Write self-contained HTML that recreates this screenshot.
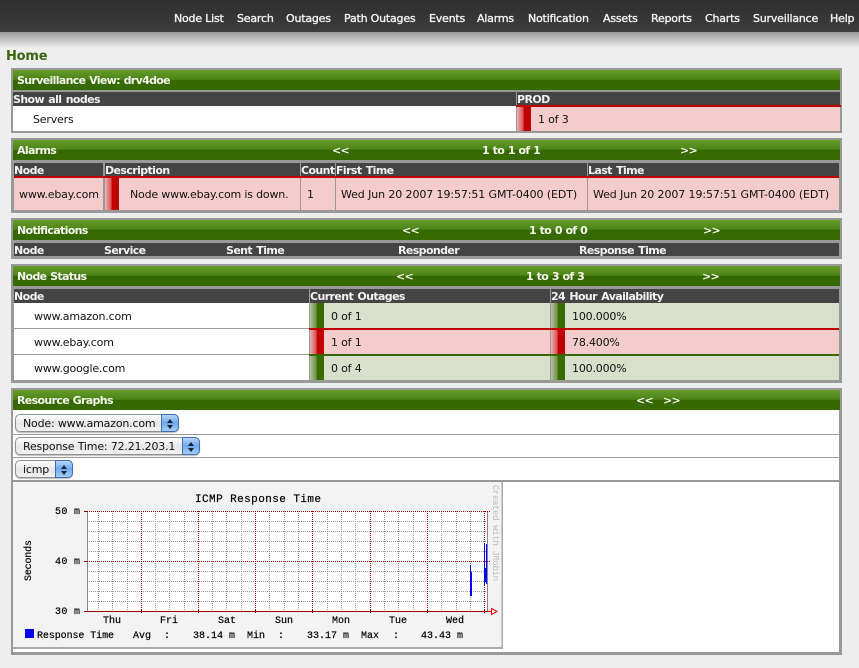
<!DOCTYPE html>
<html><head><meta charset="utf-8"><title>Home</title>
<style>
html,body{margin:0;padding:0;width:859px;height:668px;overflow:hidden;background:#eeeeee;font-family:"DejaVu Sans","Liberation Sans",sans-serif;font-size:11px;color:#111}
div,span{position:absolute;white-space:nowrap;box-sizing:border-box}
#top{left:0;top:0;width:859px;height:32px;background:linear-gradient(#2f2f2f,#3c3c3c)}
#sh{left:0;top:32px;width:859px;height:16px;background:linear-gradient(#9a9a9a,#eeeeee)}
.n{top:11px;color:#f4f4f4;font-size:11px;-webkit-text-stroke:.35px #f4f4f4;letter-spacing:-.2px;line-height:16px}
.p{left:11px;width:831px;background:#999;}
.t{left:2px;width:827px;height:20px;top:2px;background:linear-gradient(#659c2a 0,#4b8316 48%,#356800 50%,#366a00 100%)}
.t span{color:#f6f8f0;font-weight:bold;font-size:11px;top:4px;line-height:14px;letter-spacing:-.66px;word-spacing:.5px}
.h{background:#444;color:#f2f2f2;font-weight:bold;font-size:11px;line-height:14px;height:14px;padding-top:1px;letter-spacing:-.6px;word-spacing:1px}
.w{background:#fff;padding-top:1px;letter-spacing:-.18px}
.pk{background:#f5cccc;padding-top:1px;letter-spacing:-.18px}
.gn{background:#d8e0cc;padding-top:1px;letter-spacing:-.18px}
.ir{width:14px;background:linear-gradient(90deg,#ecb4b4 0,#d84f4f 45%,#c00000 50%,#c00000 100%)}
.ig{width:14px;background:linear-gradient(90deg,#b4c4a0 0,#6f8f45 45%,#3a6b00 50%,#3a6b00 100%)}
.sel{height:18px;left:15px;border:1px solid #8f8f8f;border-radius:5px;background:linear-gradient(#fdfdfd,#e6e6e6 55%,#f2f2f2);line-height:15px;padding-left:7px;padding-top:1px;box-shadow:0 1px 1px #bbb;color:#111;letter-spacing:-.18px}
.cap{right:-1px;top:-1px;width:18px;height:18px;border:1px solid #3e6fb5;border-radius:0 5px 5px 0;background:linear-gradient(#b8d6f8,#6fa8ee 50%,#a9cdf8)}
.cap:before{content:"";position:absolute;left:5px;top:4px;border:3px solid transparent;border-top:0;border-bottom:4px solid #123}
.cap:after{content:"";position:absolute;left:5px;top:10px;border:3px solid transparent;border-bottom:0;border-top:4px solid #123}
.line{height:1px;background:#999}
</style></head><body>
<div id="top"></div><div id="sh"></div>
<div class="n" style="left:174px">Node List</div>
<div class="n" style="left:237px">Search</div>
<div class="n" style="left:286px">Outages</div>
<div class="n" style="left:344px">Path Outages</div>
<div class="n" style="left:429px">Events</div>
<div class="n" style="left:477px">Alarms</div>
<div class="n" style="left:528px">Notification</div>
<div class="n" style="left:603px">Assets</div>
<div class="n" style="left:651px">Reports</div>
<div class="n" style="left:705px">Charts</div>
<div class="n" style="left:753px">Surveillance</div>
<div class="n" style="left:830px">Help</div>
<div style="left:6px;top:48px;font-weight:bold;font-size:13px;line-height:18px;color:#3a6510;letter-spacing:-.2px">Home</div>

<!-- Surveillance -->
<div class="p" style="top:68px;height:65px">
 <div class="t"><span style="left:4px">Surveillance View: drv4doe</span></div>
 <div class="h" style="left:2px;top:24px;width:503px">Show all nodes</div>
 <div class="h" style="left:506px;top:24px;width:323px">PROD</div>
 <div style="left:505px;top:37px;width:325px;height:2px;background:#c00000"></div>
 <div class="w" style="left:2px;top:38px;width:503px;height:25px;line-height:25px;padding-left:20px">Servers</div>
 <div class="pk" style="left:506px;top:39px;width:323px;height:24px;line-height:24px;padding-left:21px">1 of 3</div>
 <div class="ir" style="left:506px;top:39px;height:24px"></div>
</div>

<!-- Alarms -->
<div class="p" style="top:138px;height:75px">
 <div class="t"><span style="left:4px">Alarms</span><span style="left:319px">&lt;&lt;</span><span style="left:469px">1 to 1 of 1</span><span style="left:667px">&gt;&gt;</span></div>
 <div class="h" style="left:3px;top:25px;width:89px">Node</div>
 <div class="h" style="left:94px;top:25px;width:195px">Description</div>
 <div class="h" style="left:290px;top:25px;width:34px">Count</div>
 <div class="h" style="left:325px;top:25px;width:251px">First Time</div>
 <div class="h" style="left:577px;top:25px;width:251px">Last Time</div>
 <div style="left:3px;top:38px;width:825px;height:2px;background:#c00000"></div>
 <div class="pk" style="left:3px;top:40px;width:89px;height:32px;line-height:32px;padding-left:5px">www.ebay.com</div>
 <div class="pk" style="left:94px;top:40px;width:195px;height:32px;line-height:32px;padding-left:25px">Node www.ebay.com is down.</div>
 <div class="ir" style="left:94px;top:40px;height:32px"></div>
 <div class="pk" style="left:290px;top:40px;width:34px;height:32px;line-height:32px;padding-left:6px">1</div>
 <div class="pk" style="left:325px;top:40px;width:251px;height:32px;line-height:32px;padding-left:5px;letter-spacing:-.1px">Wed Jun 20 2007 19:57:51 GMT-0400 (EDT)</div>
 <div class="pk" style="left:577px;top:40px;width:251px;height:32px;line-height:32px;padding-left:5px;letter-spacing:-.1px">Wed Jun 20 2007 19:57:51 GMT-0400 (EDT)</div>
</div>

<!-- Notifications -->
<div class="p" style="top:218px;height:41px">
 <div class="t"><span style="left:4px">Notifications</span><span style="left:389px">&lt;&lt;</span><span style="left:516px">1 to 0 of 0</span><span style="left:690px">&gt;&gt;</span></div>
 <div class="h" style="left:3px;top:25px;width:825px;height:13px"></div>
 <div class="h" style="left:3px;top:25px;background:none">Node</div>
 <div class="h" style="left:93px;top:25px;background:none">Service</div>
 <div class="h" style="left:215px;top:25px;background:none">Sent Time</div>
 <div class="h" style="left:387px;top:25px;background:none">Responder</div>
 <div class="h" style="left:568px;top:25px;background:none">Response Time</div>
</div>

<!-- Node Status -->
<div class="p" style="top:264px;height:119px">
 <div class="t"><span style="left:4px">Node Status</span><span style="left:383px">&lt;&lt;</span><span style="left:513px">1 to 3 of 3</span><span style="left:689px">&gt;&gt;</span></div>
 <div class="h" style="left:3px;top:25px;width:295px">Node</div>
 <div class="h" style="left:299px;top:25px;width:240px">Current Outages</div>
 <div class="h" style="left:540px;top:25px;width:288px">24 Hour Availability</div>

 <div class="w" style="left:3px;top:39px;width:295px;height:25px;line-height:26px;padding-left:20px">www.amazon.com</div>
 <div class="w" style="left:3px;top:65px;width:295px;height:25px;line-height:26px;padding-left:20px">www.ebay.com</div>
 <div class="w" style="left:3px;top:91px;width:295px;height:25px;line-height:26px;padding-left:20px">www.google.com</div>

 <div class="gn" style="left:299px;top:39px;width:240px;height:25px;line-height:26px;padding-left:21px">0 of 1</div>
 <div class="gn" style="left:540px;top:39px;width:288px;height:25px;line-height:26px;padding-left:21px">100.000%</div>
 <div class="ig" style="left:299px;top:39px;height:25px"></div><div class="ig" style="left:540px;top:39px;height:25px"></div>

 <div style="left:298px;top:64px;width:530px;height:2px;background:#c00000"></div>
 <div class="pk" style="left:299px;top:66px;width:240px;height:24px;line-height:24px;padding-left:21px">1 of 1</div>
 <div class="pk" style="left:540px;top:66px;width:288px;height:24px;line-height:24px;padding-left:21px">78.400%</div>
 <div class="ir" style="left:299px;top:66px;height:24px"></div><div class="ir" style="left:540px;top:66px;height:24px"></div>

 <div style="left:298px;top:90px;width:530px;height:2px;background:#356800"></div>
 <div class="gn" style="left:299px;top:92px;width:240px;height:24px;line-height:24px;padding-left:21px">0 of 4</div>
 <div class="gn" style="left:540px;top:92px;width:288px;height:24px;line-height:24px;padding-left:21px">100.000%</div>
 <div class="ig" style="left:299px;top:92px;height:24px"></div><div class="ig" style="left:540px;top:92px;height:24px"></div>
</div>

<!-- Resource Graphs -->
<div class="p" style="top:388px;height:267px">
 <div class="t"><span style="left:4px">Resource Graphs</span><span style="left:623px">&lt;&lt;</span><span style="left:650px">&gt;&gt;</span></div>
 <div class="w" style="left:2px;top:22px;width:826px;height:242px"></div>
 <div class="line" style="left:2px;top:46px;width:826px"></div>
 <div class="line" style="left:2px;top:69px;width:826px"></div>
 <div style="left:2px;top:92px;width:826px;height:2px;background:#999"></div>
</div>
<div class="sel" style="top:414px;width:164px">Node: www.amazon.com<div class="cap"></div></div>
<div class="sel" style="top:437px;width:185px">Response Time: 72.21.203.1<div class="cap"></div></div>
<div class="sel" style="top:460px;width:58px">icmp<div class="cap"></div></div>

<svg style="position:absolute;left:13px;top:482px" width="490" height="167" viewBox="13 482 490 167" xmlns="http://www.w3.org/2000/svg">
 <rect x="13" y="482" width="490" height="167" fill="#f3f3f3"/>
 <rect x="13" y="647" width="490" height="2" fill="#aaa"/>
 <rect x="501.500" y="482" width="1.500" height="167" fill="#aaa"/>
 <rect x="87" y="511" width="400" height="100" fill="#fff"/>
 <g stroke="#999" stroke-width="1" stroke-dasharray="1 1" fill="none">
  <path d="M87 521.500H487M87 531.500H487M87 541.500H487M87 551.500H487M87 571.500H487M87 581.500H487M87 591.500H487M87 601.500H487"/>
  <path d="M98.500 511V611M112.500 511V611M127.500 511V611M155.500 511V611M169.500 511V611M184.500 511V611M212.500 511V611M226.500 511V611M241.500 511V611M269.500 511V611M284.500 511V611M298.500 511V611M327.500 511V611M341.500 511V611M355.500 511V611M384.500 511V611M398.500 511V611M413.500 511V611M441.500 511V611M456.500 511V611M470.500 511V611"/>
 </g>
 <path d="M87.500 511V611M487.500 511V611" stroke="#888" fill="none"/>
 <g stroke="#a00000" stroke-width="1" stroke-dasharray="1 1" fill="none">
  <path d="M141.500 511V611M198.500 511V611M255.500 511V611M312.500 511V611M370.500 511V611M427.500 511V611M484.500 511V611"/>
  <path d="M87 511.500H490M87 561.500H490"/>
 </g>
 <path d="M84 511.500H88M84 561.500H88M84 611.500H488" stroke="#990000" fill="none"/>
 <path d="M141.500 609V613M198.500 609V613M255.500 609V613M312.500 609V613M370.500 609V613M427.500 609V613M484.500 609V613" stroke="#990000" fill="none"/>
 <path d="M470.500 565V596" stroke="#0000ff" fill="none"/>
 <path d="M471.500 572V596" stroke="#0000ff" fill="none"/>
 <path d="M484.500 543V585M486.500 544V584M485.500 568V582" stroke="#0000ff" fill="none"/>
 <path d="M488 611.500H491M491.500 608.500L497 611.500L491.500 614.500Z" stroke="#ff0000" fill="none"/>
 <g font-family="'Liberation Mono','DejaVu Sans Mono',monospace" font-size="10px" fill="#000" stroke="#000" stroke-width=".2">
  <text x="195" y="502" font-size="11px" textLength="126">ICMP Response Time</text>
  <text x="55" y="514" textLength="25">50 m</text>
  <text x="55" y="564" textLength="25">40 m</text>
  <text x="55" y="614" textLength="25">30 m</text>
  <text transform="translate(31 581) rotate(-90)" textLength="41">Seconds</text>
  <text x="103" y="623">Thu</text><text x="160" y="623">Fri</text><text x="218" y="623">Sat</text>
  <text x="275" y="623">Sun</text><text x="332" y="623">Mon</text><text x="389" y="623">Tue</text><text x="446" y="623">Wed</text>
  <text x="37" y="638" textLength="77">Response Time</text>
  <text x="133" y="638">Avg</text><text x="164" y="638">:</text>
  <text x="193" y="638" textLength="42">38.14 m</text>
  <text x="247" y="638">Min</text><text x="278" y="638">:</text>
  <text x="307" y="638" textLength="42">33.17 m</text>
  <text x="361" y="638">Max</text><text x="393" y="638">:</text>
  <text x="421" y="638" textLength="42">43.43 m</text>
  <text transform="translate(493 485) rotate(90)" fill="#bbb" stroke="none" font-size="9px" textLength="96">Created with JRobin</text>
 </g>
 <rect x="25" y="629" width="9" height="9" fill="#0000ee"/>
</svg>
</body></html>
